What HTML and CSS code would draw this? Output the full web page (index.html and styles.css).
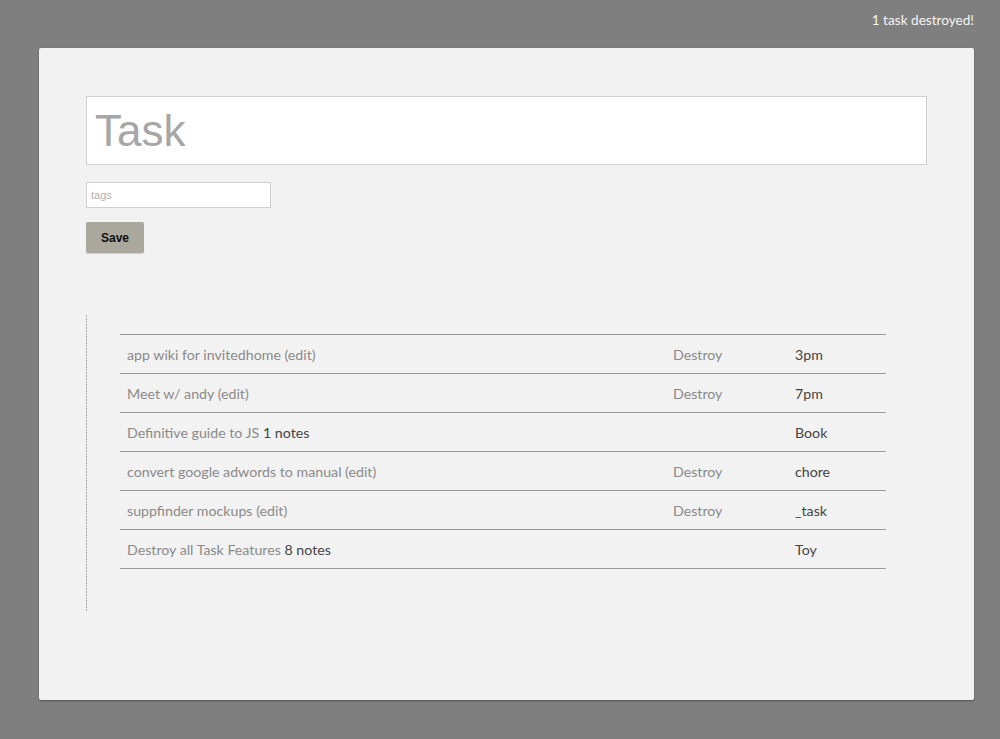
FILE: index.html
```html
<!DOCTYPE html>
<html>
<head>
<meta charset="utf-8">
<link rel="stylesheet" href="styles.css">
</head>
<body>
<div class="notice">1 task destroyed!</div>
<div class="card">
  <form class="task-form">
    <input class="task-input" type="text" placeholder="Task">
    <input class="tags-input" type="text" placeholder="tags">
    <button class="save-btn" type="button">Save</button>
  </form>
  <div class="list-wrap">
    <table class="tasks">
      <tr><td class="title">app wiki for invitedhome (edit)</td><td class="act">Destroy</td><td class="tag">3pm</td></tr>
      <tr><td class="title">Meet w/ andy (edit)</td><td class="act">Destroy</td><td class="tag">7pm</td></tr>
      <tr><td class="title">Definitive guide to JS <span class="notes">1 notes</span></td><td class="act"></td><td class="tag">Book</td></tr>
      <tr><td class="title">convert google adwords to manual (edit)</td><td class="act">Destroy</td><td class="tag">chore</td></tr>
      <tr><td class="title">suppfinder mockups (edit)</td><td class="act">Destroy</td><td class="tag">_task</td></tr>
      <tr><td class="title">Destroy all Task Features <span class="notes">8 notes</span></td><td class="act"></td><td class="tag">Toy</td></tr>
    </table>
  </div>
</div>
</body>
</html>
```

FILE: styles.css
```css
html, body {
  margin: 0;
  padding: 0;
}
body {
  background: #7f7f7f;
  font-family: Lato, "Open Sans", sans-serif;
  height: 739px;
  overflow: hidden;
}
.notice {
  height: 48px;
  box-sizing: border-box;
  padding: 12px 26px 0 0;
  text-align: right;
  color: #f4f4f4;
  font-size: 13.6px;
  line-height: 16px;
}
.card {
  margin-left: 39px;
  width: 935px;
  height: 652px;
  box-sizing: border-box;
  background: #f2f2f2;
  border-radius: 2px;
  box-shadow: 0 1px 2px rgba(0,0,0,0.35);
  padding: 48px 47px 0 47px;
}
.task-form {
  display: flex;
  flex-direction: column;
  align-items: flex-start;
  margin: 0;
}
.task-input {
  width: 841px;
  height: 69px;
  box-sizing: border-box;
  border: 1px solid #cfcfcf;
  background: #fff;
  padding: 0 8px;
  font-family: "Liberation Sans", Arial, sans-serif;
  font-size: 44px;
  color: #333;
  outline: none;
  margin: 0;
}
.task-input::placeholder { color: #a6a6a6; }
.tags-input {
  margin: 17px 0 0 0;
  width: 185px;
  height: 26px;
  box-sizing: border-box;
  border: 1px solid #cfcfcf;
  background: #fff;
  padding: 0 4px;
  font-family: "Liberation Sans", Arial, sans-serif;
  font-size: 11px;
  outline: none;
}
.tags-input::placeholder { color: #b0b0b0; }
.save-btn {
  margin-top: 14px;
  width: 58px;
  height: 31px;
  border: none;
  border-radius: 2px;
  background: #aaa89c;
  box-shadow: 0 1px 1px rgba(0,0,0,0.15);
  font-family: "Liberation Sans", Arial, sans-serif;
  font-weight: bold;
  font-size: 12px;
  color: #111;
  padding: 0;
}
.list-wrap {
  margin-top: 62px;
  padding: 19px 0 42px 34px;
  background-image: linear-gradient(to bottom, #a8a8a8 67%, transparent 67%);
  background-size: 1px 3px;
  background-repeat: repeat-y;
  background-position: left top;
}
.tasks {
  width: 766px;
  border-collapse: collapse;
  font-size: 14.2px;
}
.tasks tr {
  border-top: 1px solid #9a9a9a;
  border-bottom: 1px solid #9a9a9a;
}
.tasks td {
  height: 38px;
  padding: 0 0 0 7px;
  vertical-align: middle;
}
.title {
  width: 539px;
  color: #8a8a8a;
}
.notes { color: #444; }
.act {
  width: 115px;
  color: #8a8a8a;
}
.tag { color: #444; }
```
